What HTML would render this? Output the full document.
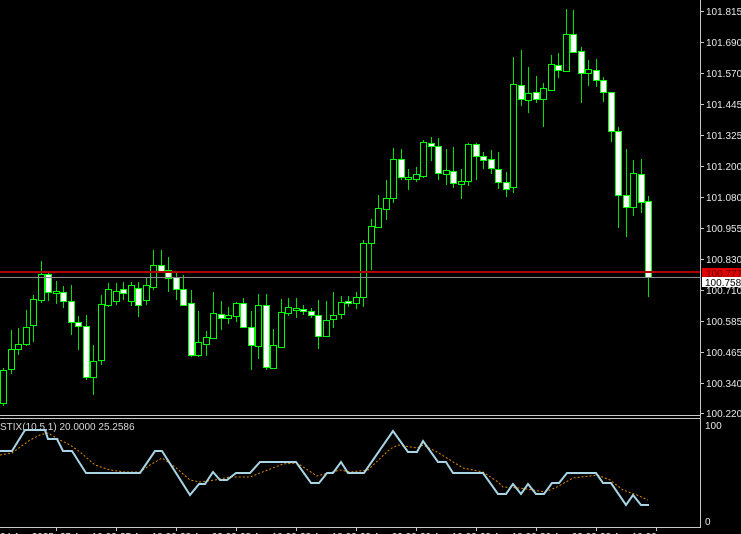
<!DOCTYPE html>
<html><head><meta charset="utf-8"><style>
html,body{margin:0;padding:0;background:#000;width:741px;height:534px;overflow:hidden}
svg{display:block}
text{font-family:"Liberation Sans",sans-serif;font-size:10px;fill:#e8e8e8}
</style></head><body>
<svg id="s" width="741" height="534" viewBox="0 0 741 534" xmlns="http://www.w3.org/2000/svg">
<rect width="741" height="534" fill="#000"/>
<g id="c"></g>
<line x1="0" y1="272" x2="700" y2="272" stroke="#b00000" stroke-width="2"/>
<line x1="0" y1="277.5" x2="700" y2="277.5" stroke="#8a8a8a" stroke-width="1"/>
<line x1="0" y1="415.5" x2="700" y2="415.5" stroke="#c8c8c8"/>
<line x1="0" y1="418.5" x2="700" y2="418.5" stroke="#c8c8c8"/>
<line x1="700.5" y1="0" x2="700.5" y2="528" stroke="#c8c8c8"/>
<line x1="0" y1="527.5" x2="701" y2="527.5" stroke="#c8c8c8"/>
<g id="ax"></g>
<rect x="702" y="268" width="39" height="9" fill="#e00000"/>
<text x="706" y="277" style="fill:#600">100.777</text>
<rect x="702" y="277" width="39" height="10" fill="#fff"/>
<text x="705" y="286" style="fill:#000">100.758</text>
<text x="0" y="430" style="fill:#d8d8d8">STIX(10,5,1) 20.0000 25.2586</text>
<text x="705" y="429">100</text>
<text x="705" y="525">0</text>
<polyline fill="none" stroke="#e08a00" stroke-width="1" stroke-dasharray="2,2" points="0,455 12,453 30,440 40,435 48,433 60,440 70,445 80,452 95,465 110,470 125,472 140,472 150,465 162,458 175,467 190,480 200,482 215,480 230,477 250,477 283,464 297,463 317,476 340,470 350,472 368,470 390,449 398,445 417,448 423,445 437,452 463,468 483,472 498,482 503,487 520,488 533,490 545,492 557,487 573,478 590,476 597,475 610,480 623,490 637,495 648,500"/>
<polyline fill="none" stroke="#a8d4e4" stroke-width="2" points="0,451 12,451 25,430 45,430 48,439 57,439 63,451 72,451 86,473 140,473 155,451 162,451 190,495 199,484 205,484 213,472 220,480 227,480 236,473 250,473 260,462 296,462 311,483 319,483 327,473 333,473 341,462 348,473 364,473 393,431 408,452 417,452 423,441 438,462 446,462 453,473 483,473 498,494 506,494 513,484 521,494 528,484 536,494 544,494 552,483 559,483 567,473 596,473 603,483 611,483 626,505 633,495 641,505 649,505"/>
<g style="font-size:9px">
<text x="0" y="540">24 Apr 2025</text><text x="60" y="540">25 Apr 10:00</text><text x="120" y="540">25 Apr 18:00</text><text x="180" y="540">28 Apr 02:00</text><text x="240" y="540">28 Apr 10:00</text><text x="300" y="540">28 Apr 18:00</text><text x="360" y="540">29 Apr 02:00</text><text x="420" y="540">29 Apr 10:00</text><text x="480" y="540">29 Apr 18:00</text><text x="540" y="540">30 Apr 02:00</text><text x="600" y="540">30 Apr 10:00</text>
</g>
</svg>
<script>
var d=[["b",370,403,368,406],["b",349,369,330,374],["b",344,349,328,355],["b",327,344,310,346],["b",299,325,295,342],["b",274,300,261,303],["w",274,292,272,301],["b",291,293,281,304],["w",292,301,286,308],["w",301,322,285,335],["w",322,326,316,350],["w",326,377,315,380],["b",361,377,345,395],["b",304,360,295,365],["b",289,305,283,307],["b",291,301,283,305],["w",289,293,282,300],["b",285,301,282,306],["w",288,305,282,317],["b",285,300,277,305],["b",265,287,250,290],["w",265,271,250,273],["w",270,278,257,292],["w",277,289,272,300],["w",289,305,275,306],["w",303,355,290,357],["b",342,355,311,357],["b",337,344,331,356],["b",313,338,292,339],["w",314,318,301,330],["b",315,318,307,324],["b",303,316,302,322],["w",303,327,298,328],["w",327,345,311,370],["b",305,346,294,359],["w",305,367,294,370],["b",345,368,329,368],["b",312,347,299,347],["b",307,313,298,316],["b",308,310,298,318],["w",309,311,305,315],["w",311,315,308,318],["w",315,336,300,349],["b",320,336,301,336],["b",315,319,292,328],["b",302,314,296,319],["w",301,303,296,307],["b",297,303,292,309],["b",243,297,240,307],["b",226,243,219,270],["b",208,227,195,227],["b",198,209,180,220],["b",159,198,148,203],["w",159,177,149,180],["b",177,179,169,190],["b",174,179,167,182],["b",142,176,140,178],["w",143,146,137,161],["w",146,173,138,180],["b",170,174,149,185],["w",171,183,147,188],["b",181,184,169,199],["b",144,181,143,186],["w",144,156,143,180],["w",156,160,152,169],["w",159,168,150,174],["w",169,182,152,189],["w",182,189,172,197],["b",84,187,57,193],["w",85,99,50,106],["b",93,100,67,113],["w",92,99,76,103],["b",88,99,83,127],["b",64,90,55,90],["w",65,70,53,78],["b",34,71,9,71],["w",34,52,10,52],["w",51,73,47,103],["b",69,73,60,86],["w",70,80,59,87],["w",80,92,77,102],["w",92,131,92,142],["w",131,195,127,228],["w",195,207,149,237],["b",173,207,160,216],["w",174,202,159,213],["w",201,277,196,297]];
var h="";
for(var i=0;i<d.length;i++){var c=d[i],x=Math.round(3+7.5*i);
h+='<line x1="'+(x+.5)+'" y1="'+c[3]+'" x2="'+(x+.5)+'" y2="'+c[4]+'" stroke="#00e000"/>';
var t=c[1],b=c[2];if(b-t<1)b=t+1;
h+='<rect x="'+(x-2.5)+'" y="'+(t+.5)+'" width="6" height="'+(b-t)+'" fill="'+(c[0]=="w"?"#fff":"#000")+'" stroke="#00ff00"/>';}
document.getElementById("c").innerHTML=h;
var L=[["101.815",11],["101.690",42],["101.570",73],["101.445",104],["101.325",135],["101.200",166],["101.080",197],["100.955",228],["100.830",259],["100.710",290],["100.585",321],["100.465",352],["100.340",383],["100.220",413]];
var a="";for(var j=0;j<L.length;j++){a+='<line x1="700" y1="'+(L[j][1]+.5)+'" x2="704" y2="'+(L[j][1]+.5)+'" stroke="#c8c8c8"/><text x="706" y="'+(L[j][1]+4)+'">'+L[j][0]+'</text>';}
for(var k=56;k<700;k+=60){a+='<line x1="'+(k+.5)+'" y1="527" x2="'+(k+.5)+'" y2="531" stroke="#c8c8c8"/>';}
document.getElementById("ax").innerHTML=a;
</script>
</body></html>
